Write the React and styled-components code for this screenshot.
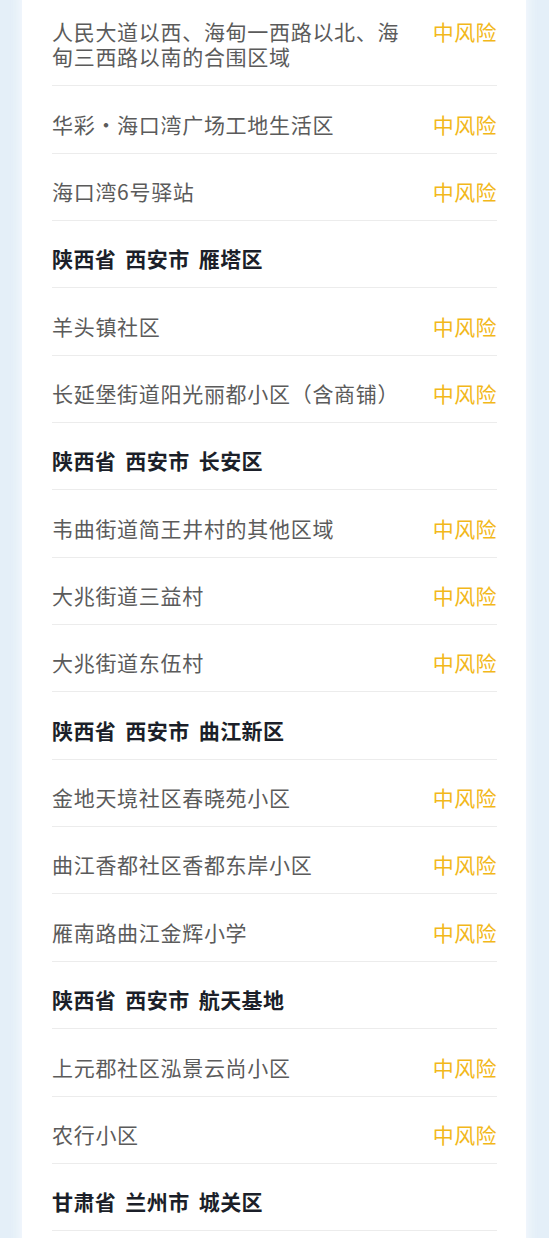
import React from "react";
import styled, { createGlobalStyle } from "styled-components";

const Global = createGlobalStyle`
  html, body { margin: 0; padding: 0; background: #e4eff8; }
  body { font-family: "Noto Sans CJK SC", "Noto Sans", sans-serif; }
`;

const Page = styled.div`
  width: 549px;
  height: 1238px;
  overflow: hidden;
  background: #e4eff8;
`;

const Card = styled.section`
  margin: -6px 23px 0 22px;
  padding: 0 29px 40px 30px;
  background: #ffffff;
  box-shadow: 0 0 10px 3px rgba(244, 249, 253, 0.95);
`;

const Row = styled.div`
  display: flex;
  align-items: flex-start;
  justify-content: space-between;
  padding: 25.35px 0 16px;
  border-bottom: 1px solid #ececec;
  font-size: 21px;
  line-height: 25px;
`;

const Name = styled.div`
  max-width: 356px;
  color: #5b5b5b;
  letter-spacing: 0.7px;
`;

const Header = styled.div`
  color: #1b1f29;
  font-weight: 700;
  letter-spacing: 0.4px;
  word-spacing: 4px;
`;

const Risk = styled.span`
  flex-shrink: 0;
  margin-left: auto;
  color: #f2b81a;
  letter-spacing: 0.4px;
`;

const items = [
  { name: "人民大道以西、海甸一西路以北、海甸三西路以南的合围区域", risk: "中风险" },
  { name: "华彩·海口湾广场工地生活区", risk: "中风险" },
  { name: "海口湾6号驿站", risk: "中风险" },
  { header: "陕西省 西安市 雁塔区" },
  { name: "羊头镇社区", risk: "中风险" },
  { name: "长延堡街道阳光丽都小区（含商铺）", risk: "中风险" },
  { header: "陕西省 西安市 长安区" },
  { name: "韦曲街道简王井村的其他区域", risk: "中风险" },
  { name: "大兆街道三益村", risk: "中风险" },
  { name: "大兆街道东伍村", risk: "中风险" },
  { header: "陕西省 西安市 曲江新区" },
  { name: "金地天境社区春晓苑小区", risk: "中风险" },
  { name: "曲江香都社区香都东岸小区", risk: "中风险" },
  { name: "雁南路曲江金辉小学", risk: "中风险" },
  { header: "陕西省 西安市 航天基地" },
  { name: "上元郡社区泓景云尚小区", risk: "中风险" },
  { name: "农行小区", risk: "中风险" },
  { header: "甘肃省 兰州市 城关区" },
];

export default function App() {
  return (
    <Page>
      <Global />
      <Card>
        {items.map((it, i) =>
          it.header ? (
            <Row key={i}>
              <Header>{it.header}</Header>
            </Row>
          ) : (
            <Row key={i}>
              <Name>{it.name}</Name>
              <Risk>{it.risk}</Risk>
            </Row>
          )
        )}
      </Card>
    </Page>
  );
}
